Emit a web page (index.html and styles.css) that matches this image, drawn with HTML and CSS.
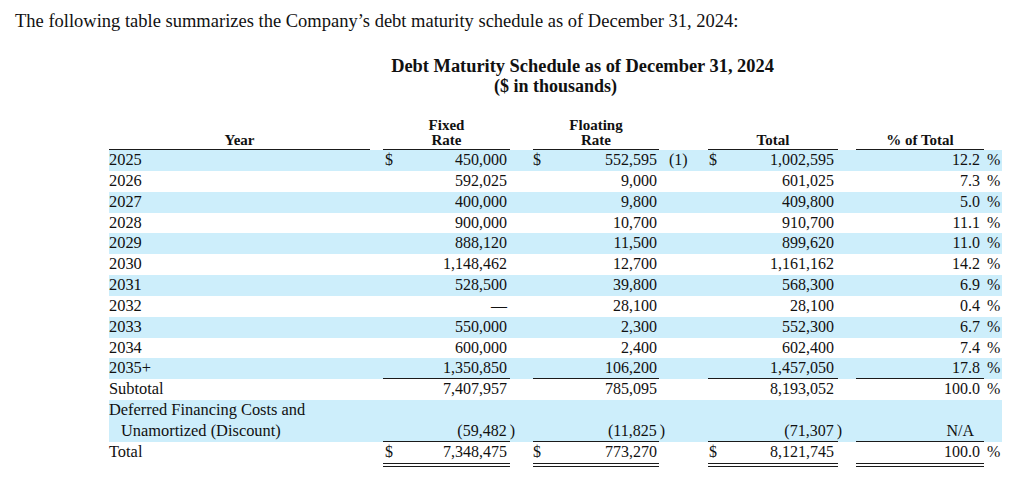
FILE: index.html
```html
<!DOCTYPE html>
<html lang="en">
<head>
<meta charset="utf-8">
<title>Debt Maturity Schedule</title>
<link rel="stylesheet" href="styles.css">
</head>
<body>
<p class="intro">The following table summarizes the Company’s debt maturity schedule as of December 31, 2024:</p>
<div class="caption">
  <div class="title">Debt Maturity Schedule as of December 31, 2024</div>
  <div class="sub">($ in thousands)</div>
</div>
<table class="debt">
  <colgroup>
    <col class="c-label"><col class="c-gap1"><col class="c-fixed"><col class="c-gap2"><col class="c-float"><col class="c-note"><col class="c-total"><col class="c-gap3"><col class="c-pct"><col class="c-sign">
  </colgroup>
  <thead>
    <tr>
      <th class="hd">Year</th><th></th>
      <th class="hd">Fixed<br>Rate</th><th></th>
      <th class="hd">Floating<br>Rate</th><th></th>
      <th class="hd">Total</th><th></th>
      <th class="hd">% of Total</th><th></th>
    </tr>
  </thead>
  <tbody>
    <tr class="band">
      <td class="lbl">2025</td><td></td>
      <td class="num"><span class="cur cur-fixed">$</span>450,000</td><td></td>
      <td class="num num-float"><span class="cur">$</span>552,595</td><td class="note">(1)</td>
      <td class="num num-total"><span class="cur cur-total">$</span>1,002,595</td><td></td>
      <td class="num num-pct">12.2</td><td class="sign">%</td>
    </tr>
    <tr>
      <td class="lbl">2026</td><td></td>
      <td class="num">592,025</td><td></td>
      <td class="num num-float">9,000</td><td></td>
      <td class="num num-total">601,025</td><td></td>
      <td class="num num-pct">7.3</td><td class="sign">%</td>
    </tr>
    <tr class="band">
      <td class="lbl">2027</td><td></td>
      <td class="num">400,000</td><td></td>
      <td class="num num-float">9,800</td><td></td>
      <td class="num num-total">409,800</td><td></td>
      <td class="num num-pct">5.0</td><td class="sign">%</td>
    </tr>
    <tr>
      <td class="lbl">2028</td><td></td>
      <td class="num">900,000</td><td></td>
      <td class="num num-float">10,700</td><td></td>
      <td class="num num-total">910,700</td><td></td>
      <td class="num num-pct">11.1</td><td class="sign">%</td>
    </tr>
    <tr class="band">
      <td class="lbl">2029</td><td></td>
      <td class="num">888,120</td><td></td>
      <td class="num num-float">11,500</td><td></td>
      <td class="num num-total">899,620</td><td></td>
      <td class="num num-pct">11.0</td><td class="sign">%</td>
    </tr>
    <tr>
      <td class="lbl">2030</td><td></td>
      <td class="num">1,148,462</td><td></td>
      <td class="num num-float">12,700</td><td></td>
      <td class="num num-total">1,161,162</td><td></td>
      <td class="num num-pct">14.2</td><td class="sign">%</td>
    </tr>
    <tr class="band">
      <td class="lbl">2031</td><td></td>
      <td class="num">528,500</td><td></td>
      <td class="num num-float">39,800</td><td></td>
      <td class="num num-total">568,300</td><td></td>
      <td class="num num-pct">6.9</td><td class="sign">%</td>
    </tr>
    <tr>
      <td class="lbl">2032</td><td></td>
      <td class="num">—</td><td></td>
      <td class="num num-float">28,100</td><td></td>
      <td class="num num-total">28,100</td><td></td>
      <td class="num num-pct">0.4</td><td class="sign">%</td>
    </tr>
    <tr class="band">
      <td class="lbl">2033</td><td></td>
      <td class="num">550,000</td><td></td>
      <td class="num num-float">2,300</td><td></td>
      <td class="num num-total">552,300</td><td></td>
      <td class="num num-pct">6.7</td><td class="sign">%</td>
    </tr>
    <tr>
      <td class="lbl">2034</td><td></td>
      <td class="num">600,000</td><td></td>
      <td class="num num-float">2,400</td><td></td>
      <td class="num num-total">602,400</td><td></td>
      <td class="num num-pct">7.4</td><td class="sign">%</td>
    </tr>
    <tr class="band">
      <td class="lbl">2035+</td><td></td>
      <td class="num rule">1,350,850</td><td></td>
      <td class="num num-float rule">106,200</td><td></td>
      <td class="num num-total rule">1,457,050</td><td></td>
      <td class="num num-pct rule">17.8</td><td class="sign">%</td>
    </tr>
    <tr>
      <td class="lbl">Subtotal</td><td></td>
      <td class="num">7,407,957</td><td></td>
      <td class="num num-float">785,095</td><td></td>
      <td class="num num-total">8,193,052</td><td></td>
      <td class="num num-pct">100.0</td><td class="sign">%</td>
    </tr>
    <tr class="band two">
      <td class="lbl"><div>Deferred Financing Costs and</div><div class="indent">Unamortized (Discount)</div></td><td></td>
      <td class="num rule">(59,482<span class="cp">)</span></td><td></td>
      <td class="num num-float rule">(11,825<span class="cp">)</span></td><td></td>
      <td class="num num-total rule">(71,307<span class="cp">)</span></td><td></td>
      <td class="num num-pct na rule">N/A</td><td></td>
    </tr>
    <tr class="total">
      <td class="lbl">Total</td><td></td>
      <td class="num dbl"><span class="cur cur-fixed">$</span>7,348,475</td><td></td>
      <td class="num num-float dbl"><span class="cur">$</span>773,270</td><td></td>
      <td class="num num-total dbl"><span class="cur cur-total">$</span>8,121,745</td><td></td>
      <td class="num num-pct dbl">100.0</td><td class="sign">%</td>
    </tr>
  </tbody>
</table>
</body>
</html>
```

FILE: styles.css
```css
html, body {
  margin: 0;
  padding: 0;
  background: #ffffff;
}

body {
  font-family: "Liberation Serif", "Times New Roman", serif;
  color: #111111;
  padding-top: 11px;
}

.intro {
  margin: 0;
  padding-left: 15px;
  font-size: 18.5px;
  line-height: 20px;
}

.caption {
  margin: 25px 0 0 109px;
  width: 893px;
  font-weight: bold;
  font-size: 18px;
  line-height: 20px;
  text-align: center;
}

.caption .title {
  margin-left: 54px;
  font-size: 18.4px;
}

.debt {
  margin: 22px 0 0 109px;
  width: 893px;
  table-layout: fixed;
  border-collapse: separate;
  border-spacing: 0;
  font-size: 16px;
  line-height: 20.85px;
}

.c-label { width: 261px; }
.c-gap1 { width: 13px; }
.c-fixed { width: 127px; }
.c-gap2 { width: 23px; }
.c-float { width: 126px; }
.c-note { width: 49px; }
.c-total { width: 130px; }
.c-gap3 { width: 18px; }
.c-pct { width: 128px; }
.c-sign { width: 18px; }

.debt th {
  padding: 0 0 1px;
  font-size: 15px;
  line-height: 15px;
  font-weight: bold;
  text-align: center;
  vertical-align: bottom;
}

.debt th.hd {
  border-bottom: 1px solid #1a1a1a;
}

.debt td {
  padding: 0;
  vertical-align: top;
  white-space: nowrap;
}

.debt tr.two td {
  vertical-align: bottom;
}

.debt tr.band td {
  background: #cdeefb;
}

.lbl {
  text-align: left;
  font-size: 16.4px;
}

.indent {
  padding-left: 12px;
}

.num {
  text-align: right;
  padding-right: 3px !important;
}

.num-float {
  padding-right: 2px !important;
}

.num-total {
  padding-right: 4px !important;
}

.num-pct {
  padding-right: 4px !important;
}

.na {
  padding-right: 10px !important;
}

.cur {
  float: left;
}

.cur-fixed {
  margin-left: 2px;
}

.cur-total {
  margin-left: 1px;
}

.cp {
  margin-left: 3px;
  margin-right: -8px;
}

.note {
  padding-left: 10px !important;
}

.sign {
  padding-left: 3px !important;
}

.rule {
  box-shadow: inset 0 -1px 0 #1a1a1a;
}

.dbl {
  border-bottom: 4px double #1a1a1a;
}
```
